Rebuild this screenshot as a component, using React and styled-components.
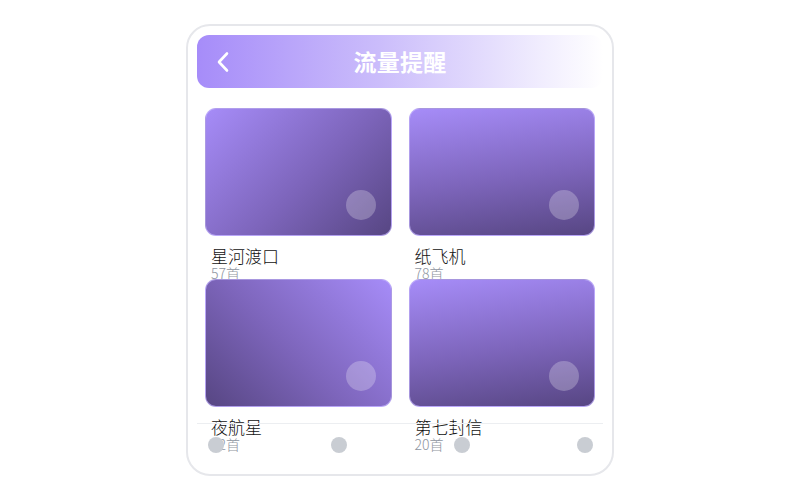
import styled, { createGlobalStyle } from "styled-components";

const GlobalStyle = createGlobalStyle`
  * { box-sizing: border-box; }
  html, body { margin: 0; padding: 0; background: #ffffff; }
  body {
    font-family: "Noto Sans CJK SC", "Noto Sans", sans-serif;
  }
`;

const Page = styled.div`
  width: 800px;
  height: 500px;
  display: flex;
  align-items: center;
  justify-content: center;
`;

const Phone = styled.div`
  position: relative;
  width: 428px;
  height: 452px;
  border: 2px solid #e6e7eb;
  border-radius: 24px;
  padding: 9px;
  overflow: hidden;
  background: #ffffff;
`;

const Header = styled.header`
  height: 53px;
  border-radius: 12px;
  background: linear-gradient(90deg, #a68cf9 0%, #cbbdfb 45%, #ffffff 100%);
  display: grid;
  grid-template-columns: 40px 1fr 40px;
  align-items: center;
  padding: 0 6px;
`;

const BackButton = styled.button`
  border: 0;
  background: transparent;
  padding: 0;
  display: flex;
  align-items: center;
  justify-content: center;
  height: 40px;
  cursor: pointer;
`;

const Title = styled.h1`
  margin: 0;
  text-align: center;
  color: #ffffff;
  font-size: 23px;
  font-weight: 700;
  letter-spacing: 0.3px;
  line-height: 1;
`;

const Grid = styled.div`
  display: grid;
  grid-template-columns: 1fr 1fr;
  column-gap: 17px;
  padding: 20px 8px 0 8px;
`;

const Item = styled.div`
  display: flex;
  flex-direction: column;
`;

const Cover = styled.div`
  position: relative;
  height: 128px;
  border-radius: 11px;
  border: 1px solid rgba(196, 181, 253, 0.7);
  background: linear-gradient(${(p) => p.angle}, #a68cf8 0%, #7d65bb 55%, #574683 100%);
`;

const Bubble = styled.span`
  position: absolute;
  right: 15px;
  bottom: 15px;
  width: 30px;
  height: 30px;
  border-radius: 50%;
  background: rgba(255, 255, 255, 0.25);
`;

const Info = styled.div`
  height: 43px;
  padding: 8px 0 0 6px;
`;

const Name = styled.div`
  font-size: 17px;
  font-weight: 300;
  line-height: 23px;
  color: #111111;
`;

const Count = styled.div`
  font-size: 14px;
  font-weight: 300;
  line-height: 13px;
  height: 13px;
  color: #8f96a1;
`;

const TabBar = styled.nav`
  position: absolute;
  left: 9px;
  right: 9px;
  bottom: 0;
  height: 51px;
  border-top: 1px solid #eceef1;
  display: flex;
  justify-content: space-between;
  align-items: flex-start;
  padding: 13px 10px 0 11px;
`;

const Dot = styled.span`
  width: 16px;
  height: 16px;
  border-radius: 50%;
  background: #c9cdd3;
`;

const albums = [
  { name: "星河渡口", count: 57, angle: "135deg" },
  { name: "纸飞机", count: 78, angle: "172deg" },
  { name: "夜航星", count: 32, angle: "225deg" },
  { name: "第七封信", count: 20, angle: "172deg" },
];

export default function App() {
  return (
    <>
      <GlobalStyle />
      <Page>
        <Phone>
          <Header>
            <BackButton aria-label="返回">
              <svg width="16" height="22" viewBox="0 0 16 22" fill="none">
                <polyline
                  points="12,2.5 4,11 12,19.5"
                  stroke="#ffffff"
                  strokeWidth="2.6"
                  strokeLinecap="round"
                  strokeLinejoin="round"
                />
              </svg>
            </BackButton>
            <Title>流量提醒</Title>
            <span />
          </Header>
          <Grid>
            {albums.map((a) => (
              <Item key={a.name}>
                <Cover angle={a.angle}>
                  <Bubble />
                </Cover>
                <Info>
                  <Name>{a.name}</Name>
                  <Count>{a.count}首</Count>
                </Info>
              </Item>
            ))}
          </Grid>
          <TabBar>
            <Dot />
            <Dot />
            <Dot />
            <Dot />
          </TabBar>
        </Phone>
      </Page>
    </>
  );
}
